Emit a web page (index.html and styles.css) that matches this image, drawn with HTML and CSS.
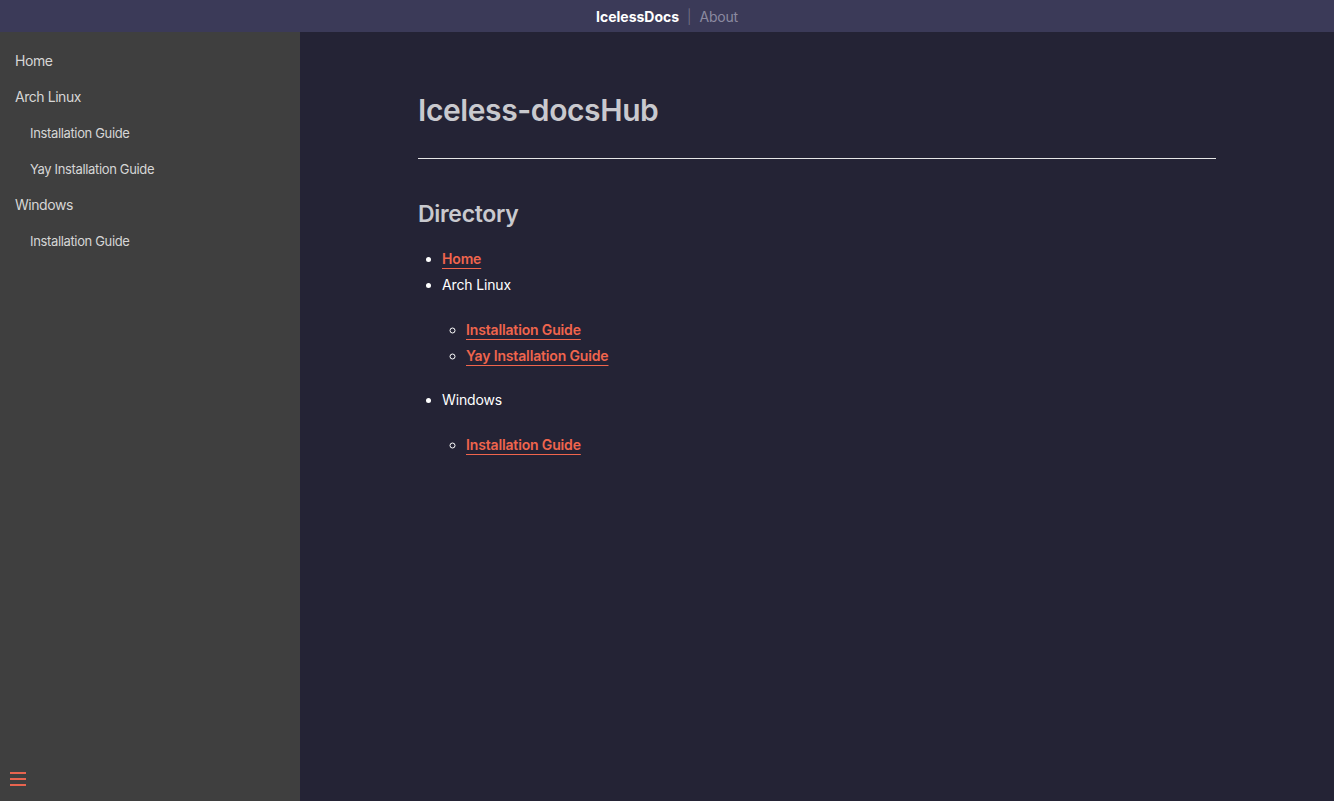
FILE: index.html
```html
<!DOCTYPE html>
<html>
<head>
<meta charset="utf-8">
<link rel="stylesheet" href="styles.css">
</head>
<body>
<header class="topbar">
  <span class="brand">IcelessDocs</span>
  <span class="sep">|</span>
  <span class="about">About</span>
</header>
<div class="layout">
  <aside class="sidebar">
    <nav class="side-nav">
      <div class="side-item">Home</div>
      <div class="side-item">Arch Linux</div>
      <div class="side-item sub">Installation Guide</div>
      <div class="side-item sub">Yay Installation Guide</div>
      <div class="side-item">Windows</div>
      <div class="side-item sub">Installation Guide</div>
    </nav>
    <div class="menu-btn">
      <svg width="16" height="14" viewBox="0 0 16 14"><rect x="0" y="1" width="16" height="2" fill="#e8644f"/><rect x="0" y="7" width="16" height="2" fill="#e8644f"/><rect x="0" y="13" width="16" height="2" fill="#e8644f"/></svg>
    </div>
  </aside>
  <main class="main">
    <div class="content">
      <h1 class="title">Iceless-docsHub</h1>
      <hr class="rule">
      <h2 class="subtitle">Directory</h2>
      <ul class="dir">
        <li><a href="#">Home</a></li>
        <li>Arch Linux
          <ul class="subdir">
            <li><a href="#">Installation Guide</a></li>
            <li><a href="#">Yay Installation Guide</a></li>
          </ul>
        </li>
        <li>Windows
          <ul class="subdir">
            <li><a href="#">Installation Guide</a></li>
          </ul>
        </li>
      </ul>
    </div>
  </main>
</div>
</body>
</html>
```
FILE: styles.css
```css
* { box-sizing: border-box; }
html, body { margin: 0; padding: 0; height: 100%; }
body {
  font-family: Inter, "Noto Sans", sans-serif;
  background: #242335;
  color: #ffffff;
  overflow: hidden;
}
.topbar {
  height: 32px;
  background: #3b3a58;
  display: flex;
  align-items: center;
  justify-content: center;
  gap: 8px;
  font-size: 14px;
}
.brand { font-weight: 700; color: #ffffff; }
.sep { color: #77778a; font-weight: 300; }
.about { color: #8b8aa0; letter-spacing: -0.2px; }
.layout {
  display: flex;
  height: calc(100vh - 32px);
}
.sidebar {
  width: 300px;
  flex: none;
  background: #3f3f3f;
  display: flex;
  flex-direction: column;
  justify-content: space-between;
}
.side-nav { padding-top: 18px; }
.side-item {
  height: 36px;
  line-height: 22px;
  padding-left: 15px;
  font-size: 14px;
  letter-spacing: -0.45px;
  color: #d6d6d6;
}
.side-item.sub { padding-left: 30px; font-size: 13px; letter-spacing: -0.35px; }
.menu-btn { padding: 0 0 14px 10px; height: 30px; }
.menu-btn svg { display: block; overflow: visible; }
.main { flex: 1; }
.content {
  width: 798px;
  margin: 0 auto;
  padding-top: 58px;
}
.title {
  margin: 0;
  font-size: 30px;
  font-weight: 600;
  color: #c9c9ce;
  line-height: 40px;
  letter-spacing: -0.4px;
}
.rule {
  margin: 28px 0 0;
  border: 0;
  border-top: 1px solid #e6e6e6;
  height: 0;
}
.subtitle {
  margin: 39px 0 0;
  font-size: 23px;
  font-weight: 600;
  color: #c9c9ce;
  line-height: 32px;
  letter-spacing: -0.3px;
}
.dir {
  margin: 16px 0 0;
  padding-left: 24px;
  font-size: 14px;
  line-height: 26px;
  letter-spacing: -0.15px;
  list-style: disc;
}
.subdir {
  list-style: circle;
  margin: 19px 0 18px;
  padding-left: 24px;
}
.dir a {
  color: #f0654d;
  font-weight: 600;
  text-decoration: underline;
  text-underline-offset: 4px;
}
```
